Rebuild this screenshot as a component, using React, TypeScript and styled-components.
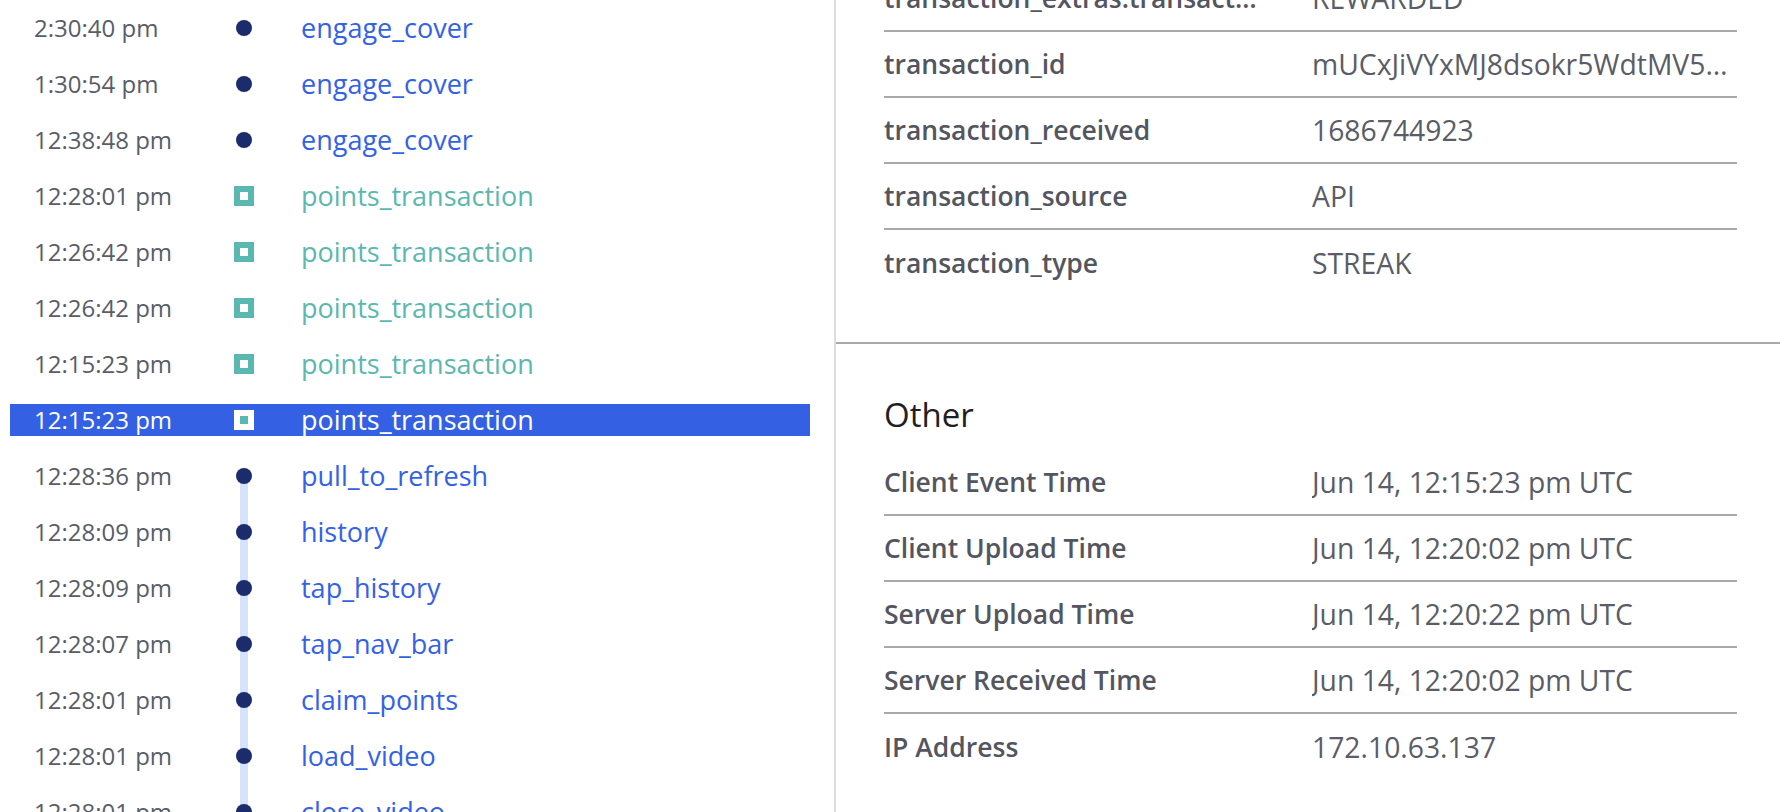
import styled, { createGlobalStyle, css } from "styled-components";

const GlobalStyle = createGlobalStyle`
  html, body {
    margin: 0;
    padding: 0;
    background: #ffffff;
  }
  body {
    font-family: "Open Sans", "Noto Sans", sans-serif;
    overflow: hidden;
  }
`;

type Marker = "dot" | "square";

type EventItem = {
  time: string;
  name: string;
  marker: Marker;
  selected?: boolean;
  line?: boolean;
};

type Prop = {
  key: string;
  value: string;
};

const events: EventItem[] = [
  { time: "2:30:40 pm", name: "engage_cover", marker: "dot" },
  { time: "1:30:54 pm", name: "engage_cover", marker: "dot" },
  { time: "12:38:48 pm", name: "engage_cover", marker: "dot" },
  { time: "12:28:01 pm", name: "points_transaction", marker: "square" },
  { time: "12:26:42 pm", name: "points_transaction", marker: "square" },
  { time: "12:26:42 pm", name: "points_transaction", marker: "square" },
  { time: "12:15:23 pm", name: "points_transaction", marker: "square" },
  { time: "12:15:23 pm", name: "points_transaction", marker: "square", selected: true },
  { time: "12:28:36 pm", name: "pull_to_refresh", marker: "dot", line: true },
  { time: "12:28:09 pm", name: "history", marker: "dot", line: true },
  { time: "12:28:09 pm", name: "tap_history", marker: "dot", line: true },
  { time: "12:28:07 pm", name: "tap_nav_bar", marker: "dot", line: true },
  { time: "12:28:01 pm", name: "claim_points", marker: "dot", line: true },
  { time: "12:28:01 pm", name: "load_video", marker: "dot", line: true },
  { time: "12:28:01 pm", name: "close_video", marker: "dot", line: true },
];

const eventProps: Prop[] = [
  { key: "transaction_extras.transaction_status", value: "REWARDED" },
  { key: "transaction_id", value: "mUCxJiVYxMJ8dsokr5WdtMV5Qx2pLr7ZsA" },
  { key: "transaction_received", value: "1686744923" },
  { key: "transaction_source", value: "API" },
  { key: "transaction_type", value: "STREAK" },
];

const otherProps: Prop[] = [
  { key: "Client Event Time", value: "Jun 14, 12:15:23 pm UTC" },
  { key: "Client Upload Time", value: "Jun 14, 12:20:02 pm UTC" },
  { key: "Server Upload Time", value: "Jun 14, 12:20:22 pm UTC" },
  { key: "Server Received Time", value: "Jun 14, 12:20:02 pm UTC" },
  { key: "IP Address", value: "172.10.63.137" },
];

const Layout = styled.div`
  display: flex;
  height: 812px;
  overflow: hidden;
`;

// 왼쪽 이벤트 스트림
const EventPanel = styled.div`
  width: 834px;
  flex-shrink: 0;
  box-sizing: border-box;
  padding: 12px 24px 0 10px;
  display: flex;
  flex-direction: column;
  gap: 24px;
  overflow: hidden;
`;

const EventRow = styled.div<{ $selected?: boolean }>`
  display: grid;
  grid-template-columns: 200px 20px 1fr;
  align-items: center;
  height: 32px;
  flex-shrink: 0;
  padding-left: 24px;
  background: ${(p) => (p.$selected ? "#3461e3" : "transparent")};
`;

const Time = styled.span<{ $selected?: boolean }>`
  font-size: 24px;
  line-height: 32px;
  white-space: nowrap;
  color: ${(p) => (p.$selected ? "#ffffff" : "#595d67")};
`;

const MarkerCell = styled.span<{ $line?: boolean }>`
  position: relative;
  display: flex;
  align-items: center;
  justify-content: center;
  height: 32px;

  ${(p) =>
    p.$line &&
    css`
      &::before {
        content: "";
        position: absolute;
        left: 6px;
        top: 16px;
        width: 8px;
        height: 56px;
        background: #d5e4fc;
      }
    `}
`;

const Dot = styled.span`
  position: relative;
  z-index: 1;
  width: 16px;
  height: 16px;
  border-radius: 50%;
  background: #1b2b6c;
`;

const Square = styled.span<{ $selected?: boolean }>`
  width: 20px;
  height: 20px;
  box-sizing: border-box;
  border: 6px solid ${(p) => (p.$selected ? "#ffffff" : "#5ab8b0")};
  background: ${(p) => (p.$selected ? "#5ab8b0" : "#ffffff")};
`;

const EventName = styled.span<{ $marker: Marker; $selected?: boolean }>`
  padding-left: 47px;
  font-size: 27px;
  line-height: 32px;
  white-space: nowrap;
  color: ${(p) =>
    p.$selected ? "#ffffff" : p.$marker === "square" ? "#5ab8b0" : "#3362e6"};
`;

// 오른쪽 속성 패널
const DetailPanel = styled.div`
  flex: 1;
  min-width: 0;
  border-left: 2px solid #dddde1;
  overflow: hidden;
`;

const Section = styled.section<{ $first?: boolean }>`
  padding: ${(p) => (p.$first ? "0 43px 46px 48px" : "54px 43px 0 48px")};
  margin-top: ${(p) => (p.$first ? "-34px" : "0")};
  border-bottom: ${(p) => (p.$first ? "2px solid #a7a9af" : "none")};
`;

const SectionTitle = styled.h3`
  margin: 0 0 18px;
  font-size: 33px;
  line-height: 34px;
  font-weight: 400;
  color: #1f2024;
`;

const PropRow = styled.div`
  display: grid;
  grid-template-columns: 380px 1fr;
  column-gap: 48px;
  align-items: center;
  height: 66px;
  box-sizing: border-box;
  border-bottom: 2px solid #a7a9af;

  &:last-child {
    border-bottom: none;
  }
`;

const PropKey = styled.span`
  font-size: 26.5px;
  font-weight: 600;
  color: #53565f;
  white-space: nowrap;
  overflow: hidden;
  text-overflow: ellipsis;
`;

const PropValue = styled.span`
  font-size: 28.3px;
  color: #5a5d66;
  white-space: nowrap;
  overflow: hidden;
  text-overflow: ellipsis;
`;

function PropList({ items }: { items: Prop[] }) {
  return (
    <>
      {items.map((p) => (
        <PropRow key={p.key}>
          <PropKey>{p.key}</PropKey>
          <PropValue>{p.value}</PropValue>
        </PropRow>
      ))}
    </>
  );
}

export default function App() {
  return (
    <>
      <GlobalStyle />
      <Layout>
        <EventPanel>
          {events.map((e, i) => (
            <EventRow key={i} $selected={e.selected}>
              <Time $selected={e.selected}>{e.time}</Time>
              <MarkerCell $line={e.line}>
                {e.marker === "dot" ? <Dot /> : <Square $selected={e.selected} />}
              </MarkerCell>
              <EventName $marker={e.marker} $selected={e.selected}>
                {e.name}
              </EventName>
            </EventRow>
          ))}
        </EventPanel>

        <DetailPanel>
          <Section $first>
            <PropList items={eventProps} />
          </Section>
          <Section>
            <SectionTitle>Other</SectionTitle>
            <PropList items={otherProps} />
          </Section>
        </DetailPanel>
      </Layout>
    </>
  );
}
